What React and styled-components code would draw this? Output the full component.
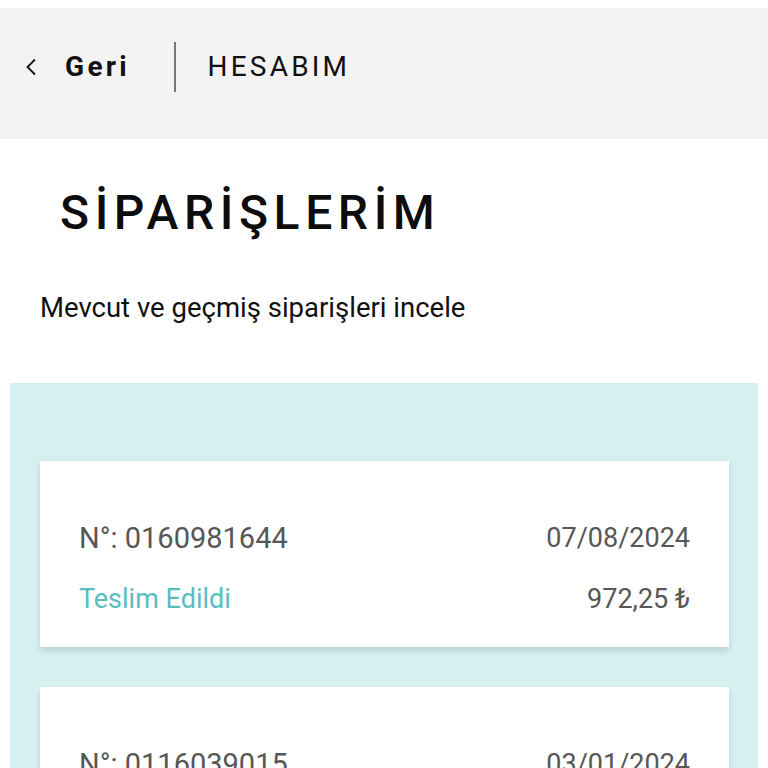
import React from 'react';
import styled, { createGlobalStyle } from 'styled-components';

const GlobalStyle = createGlobalStyle`
  html, body {
    margin: 0;
    padding: 0;
    background: #ffffff;
  }
  body {
    font-family: Roboto, "Noto Sans", "Liberation Sans", sans-serif;
    color: #111;
  }
`;

const orders = [
  { no: '0160981644', date: '07/08/2024', status: 'Teslim Edildi', total: '972,25 ₺' },
  { no: '0116039015', date: '03/01/2024', status: 'Teslim Edildi', total: '486,50 ₺' },
];

const Page = styled.div`
  padding-top: 8px;
  width: 768px;
  height: 768px;
  overflow: hidden;
`;

const TopBar = styled.header`
  height: 131px;
  box-sizing: border-box;
  background: #f3f3f3;
  display: flex;
  align-items: center;
  padding: 0 0 14px 25px;
`;

const BackLink = styled.a`
  display: flex;
  align-items: center;
  gap: 28px;
  color: #111;
  text-decoration: none;
  font-size: 28px;
  font-weight: 700;
  letter-spacing: 3.3px;
`;

const Divider = styled.span`
  width: 1.5px;
  height: 50px;
  background: #777;
  margin: 0 32px 0 44px;
`;

const Section = styled.span`
  font-size: 28px;
  font-weight: 400;
  letter-spacing: 3.2px;
  color: #111;
`;

const Title = styled.h1`
  margin: 46px 0 0 60px;
  font-size: 48px;
  font-weight: 500;
  letter-spacing: 5.6px;
  line-height: 56px;
  color: #0d0d0d;
`;

const Subtitle = styled.p`
  margin: 51px 0 0 40px;
  font-size: 27.5px;
  line-height: 32px;
  color: #111;
`;

const Panel = styled.section`
  margin: 59px 10px 0;
  background: #d6f0f0;
  padding: 78px 29px 40px 30px;
  display: flex;
  flex-direction: column;
  gap: 40px;
`;

const Card = styled.article`
  background: #fff;
  box-shadow: 0 4px 6px rgba(0, 0, 0, 0.13);
  padding: 61px 39px 31px;
  display: flex;
  justify-content: space-between;
`;

const Column = styled.div`
  display: flex;
  flex-direction: column;
  align-items: ${(p) => (p.$end ? 'flex-end' : 'flex-start')};
  gap: 28px;
`;

const Meta = styled.span`
  font-size: ${(p) => p.$size || 27}px;
  line-height: 33px;
  color: ${(p) => (p.$accent ? '#5bbdbd' : '#575757')};
`;

const Chevron = () => (
  <svg width="12" height="18" viewBox="0 0 12 18" fill="none">
    <path d="M10 1.5L2.5 9L10 16.5" stroke="#111" strokeWidth="1.8" />
  </svg>
);

export default function App() {
  return (
    <>
      <GlobalStyle />
      <Page>
        <TopBar>
          <BackLink href="#">
            <Chevron />
            Geri
          </BackLink>
          <Divider />
          <Section>HESABIM</Section>
        </TopBar>

        <Title>SİPARİŞLERİM</Title>
        <Subtitle>Mevcut ve geçmiş siparişleri incele</Subtitle>

        <Panel>
          {orders.map((o) => (
            <Card key={o.no}>
              <Column>
                <Meta $size={29}>N°: {o.no}</Meta>
                <Meta $accent>{o.status}</Meta>
              </Column>
              <Column $end>
                <Meta>{o.date}</Meta>
                <Meta>{o.total}</Meta>
              </Column>
            </Card>
          ))}
        </Panel>
      </Page>
    </>
  );
}
